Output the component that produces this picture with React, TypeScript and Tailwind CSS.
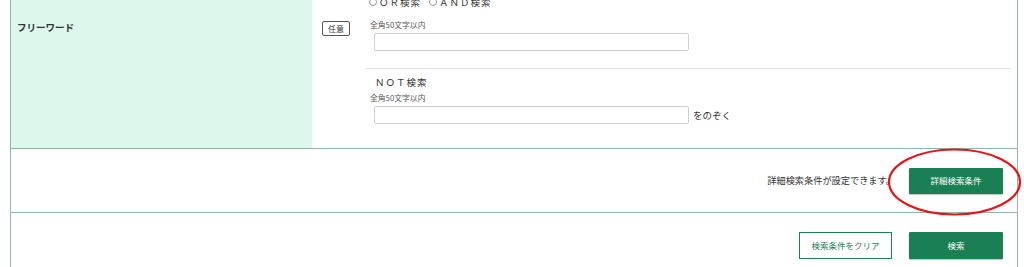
const font = { fontFamily: '"Noto Sans CJK JP", "Noto Sans", sans-serif' };

function Radio({ label }: { label: string }) {
  return (
    <span className="inline-flex items-center gap-[2px]">
      <span className="inline-block h-[8px] w-[8px] rounded-full border border-[#999] bg-white" />
      <span className="tracking-[1px]">{label}</span>
    </span>
  );
}

function Hint() {
  return <div className="h-[12px] pl-[5px] text-[7.8px] leading-[12px] text-[#555]">全角50文字以内</div>;
}

function TextBox() {
  return <div className="ml-[9px] h-[18px] w-[315px] rounded-[2px] border border-[#cfcfcf] bg-white" />;
}

export default function App() {
  return (
    <div className="relative h-[267px] w-[1024px] overflow-hidden bg-white text-[#333]" style={font}>
      <div className="ml-[10px] -mt-[6px] w-[1008px] border-x border-[#8fb7a7]">
        {/* free word row */}
        <div className="flex h-[155px] border-b border-[#8fb7a7]">
          <div className="w-[301px] bg-[#dcf7eb] pl-[6px] pt-[26px] text-[9.5px] font-bold leading-[14px]">
            フリーワード
          </div>
          <div className="flex w-[53px] items-start pl-[10px] pt-[27px]">
            <span className="flex h-[15px] w-[28px] items-center justify-center rounded-[2px] border border-[#555] text-[8px] leading-none">
              任意
            </span>
          </div>
          <div className="flex-1 pr-[6px]">
            <div className="pb-[17px]">
              <div className="flex h-[16px] items-center gap-[8px] pl-[4px] text-[9.5px]">
                <Radio label="ＯＲ検索" />
                <Radio label="ＡＮＤ検索" />
              </div>
              <div className="mt-[9px]">
                <Hint />
              </div>
              <div className="mt-[2px]">
                <TextBox />
              </div>
            </div>
            <div className="border-t border-[#e2e2e2] pt-[5px]">
              <div className="h-[16px] pl-[10px] text-[9.5px] leading-[16px] tracking-[1px]">ＮＯＴ検索</div>
              <div className="mt-[2px]">
                <Hint />
              </div>
              <div className="mt-[2px] flex items-center gap-[4px]">
                <TextBox />
                <span className="text-[9.5px]">をのぞく</span>
              </div>
            </div>
          </div>
        </div>
        {/* detail row */}
        <div className="relative flex h-[64px] items-center justify-end gap-[14px] border-b border-[#8fb7a7] pr-[14px]">
          <span className="text-[9.2px]">詳細検索条件が設定できます。</span>
          <button className="flex h-[26px] w-[94px] items-center justify-center rounded-[1px] bg-[#1a7f52] text-[8.5px] text-white shadow-[0_1px_1px_rgba(0,0,0,0.25)]">
            詳細検索条件
          </button>
        </div>
        {/* actions row */}
        <div className="flex justify-end gap-[17px] pr-[14px] pt-[19px] pb-[20px]">
          <button className="flex h-[27px] w-[93px] items-center justify-center border border-[#1a7f52] bg-white text-[8.5px] text-[#1a7f52]">
            検索条件をクリア
          </button>
          <button className="flex h-[27px] w-[94px] items-center justify-center rounded-[1px] bg-[#1a7f52] text-[8.5px] text-white shadow-[0_1px_1px_rgba(0,0,0,0.25)]">
            検索
          </button>
        </div>
      </div>
      {/* annotation */}
      <svg className="pointer-events-none absolute left-[886px] top-[147px]" width="138" height="70" viewBox="0 0 138 70">
        <ellipse cx="68.5" cy="35" rx="65.5" ry="32.5" fill="none" stroke="#e8141b" strokeWidth="2.2" />
      </svg>
    </div>
  );
}
